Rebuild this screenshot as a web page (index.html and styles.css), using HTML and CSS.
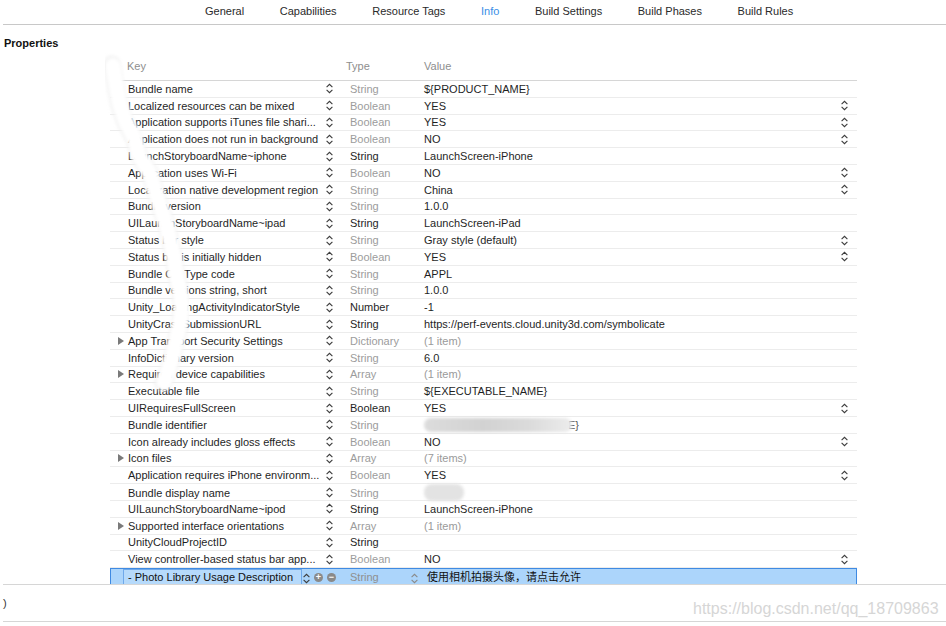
FILE: index.html
```html
<!DOCTYPE html>
<html>
<head>
<meta charset="utf-8">
<link rel="stylesheet" href="styles.css">
</head>
<body>
<svg width="0" height="0" class="defs">
  <defs>
    <symbol id="stp" viewBox="0 0 7 11"><path d="M0.6 4.2 L3.5 1.3 L6.4 4.2 M0.6 6.8 L3.5 9.7 L6.4 6.8" fill="none" stroke="currentColor" stroke-width="1.1"/></symbol>
  </defs>
</svg>
<div class="tabs">
  <span>General</span><span>Capabilities</span><span>Resource Tags</span><span class="active">Info</span><span>Build Settings</span><span>Build Phases</span><span>Build Rules</span>
</div>
<div class="props-title">Properties</div>
<div class="table">
  <div class="thead"><span class="h-key">Key</span><span>Type</span><span>Value</span></div>
  <div class="rows">
    <div class="row"><span class="k">Bundle name</span><span class="st"><svg><use href="#stp"/></svg></span><span class="t">String</span><span class="v">${PRODUCT_NAME}</span><span class="vs"></span></div>
    <div class="row"><span class="k">Localized resources can be mixed</span><span class="st"><svg><use href="#stp"/></svg></span><span class="t">Boolean</span><span class="v">YES</span><span class="vs"><svg><use href="#stp"/></svg></span></div>
    <div class="row"><span class="k">Application supports iTunes file shari...</span><span class="st"><svg><use href="#stp"/></svg></span><span class="t">Boolean</span><span class="v">YES</span><span class="vs"><svg><use href="#stp"/></svg></span></div>
    <div class="row"><span class="k">Application does not run in background</span><span class="st"><svg><use href="#stp"/></svg></span><span class="t">Boolean</span><span class="v">NO</span><span class="vs"><svg><use href="#stp"/></svg></span></div>
    <div class="row"><span class="k">LaunchStoryboardName~iphone</span><span class="st"><svg><use href="#stp"/></svg></span><span class="t dark">String</span><span class="v">LaunchScreen-iPhone</span><span class="vs"></span></div>
    <div class="row"><span class="k">Application uses Wi-Fi</span><span class="st"><svg><use href="#stp"/></svg></span><span class="t">Boolean</span><span class="v">NO</span><span class="vs"><svg><use href="#stp"/></svg></span></div>
    <div class="row"><span class="k">Localization native development region</span><span class="st"><svg><use href="#stp"/></svg></span><span class="t">String</span><span class="v">China</span><span class="vs"><svg><use href="#stp"/></svg></span></div>
    <div class="row"><span class="k">Bundle version</span><span class="st"><svg><use href="#stp"/></svg></span><span class="t">String</span><span class="v">1.0.0</span><span class="vs"></span></div>
    <div class="row"><span class="k">UILaunchStoryboardName~ipad</span><span class="st"><svg><use href="#stp"/></svg></span><span class="t dark">String</span><span class="v">LaunchScreen-iPad</span><span class="vs"></span></div>
    <div class="row"><span class="k">Status bar style</span><span class="st"><svg><use href="#stp"/></svg></span><span class="t">String</span><span class="v">Gray style (default)</span><span class="vs"><svg><use href="#stp"/></svg></span></div>
    <div class="row"><span class="k">Status bar is initially hidden</span><span class="st"><svg><use href="#stp"/></svg></span><span class="t">Boolean</span><span class="v">YES</span><span class="vs"><svg><use href="#stp"/></svg></span></div>
    <div class="row"><span class="k">Bundle OS Type code</span><span class="st"><svg><use href="#stp"/></svg></span><span class="t">String</span><span class="v">APPL</span><span class="vs"></span></div>
    <div class="row"><span class="k">Bundle versions string, short</span><span class="st"><svg><use href="#stp"/></svg></span><span class="t">String</span><span class="v">1.0.0</span><span class="vs"></span></div>
    <div class="row"><span class="k">Unity_LoadingActivityIndicatorStyle</span><span class="st"><svg><use href="#stp"/></svg></span><span class="t dark">Number</span><span class="v">-1</span><span class="vs"></span></div>
    <div class="row"><span class="k">UnityCrashSubmissionURL</span><span class="st"><svg><use href="#stp"/></svg></span><span class="t dark">String</span><span class="v">https://perf-events.cloud.unity3d.com/symbolicate</span><span class="vs"></span></div>
    <div class="row"><span class="k"><i class="tri"></i>App Transport Security Settings</span><span class="st"><svg><use href="#stp"/></svg></span><span class="t">Dictionary</span><span class="v grey">(1 item)</span><span class="vs"></span></div>
    <div class="row"><span class="k">InfoDictionary version</span><span class="st"><svg><use href="#stp"/></svg></span><span class="t">String</span><span class="v">6.0</span><span class="vs"></span></div>
    <div class="row"><span class="k"><i class="tri"></i>Required device capabilities</span><span class="st"><svg><use href="#stp"/></svg></span><span class="t">Array</span><span class="v grey">(1 item)</span><span class="vs"></span></div>
    <div class="row"><span class="k">Executable file</span><span class="st"><svg><use href="#stp"/></svg></span><span class="t">String</span><span class="v">${EXECUTABLE_NAME}</span><span class="vs"></span></div>
    <div class="row"><span class="k">UIRequiresFullScreen</span><span class="st"><svg><use href="#stp"/></svg></span><span class="t dark">Boolean</span><span class="v">YES</span><span class="vs"><svg><use href="#stp"/></svg></span></div>
    <div class="row"><span class="k">Bundle identifier</span><span class="st"><svg><use href="#stp"/></svg></span><span class="t">String</span><span class="v"><i class="blob blob-id"></i><span class="tail">E}</span></span><span class="vs"></span></div>
    <div class="row"><span class="k">Icon already includes gloss effects</span><span class="st"><svg><use href="#stp"/></svg></span><span class="t">Boolean</span><span class="v">NO</span><span class="vs"><svg><use href="#stp"/></svg></span></div>
    <div class="row"><span class="k"><i class="tri"></i>Icon files</span><span class="st"><svg><use href="#stp"/></svg></span><span class="t">Array</span><span class="v grey">(7 items)</span><span class="vs"></span></div>
    <div class="row"><span class="k">Application requires iPhone environm...</span><span class="st"><svg><use href="#stp"/></svg></span><span class="t">Boolean</span><span class="v">YES</span><span class="vs"><svg><use href="#stp"/></svg></span></div>
    <div class="row"><span class="k">Bundle display name</span><span class="st"><svg><use href="#stp"/></svg></span><span class="t">String</span><span class="v"><i class="blob blob-name"></i></span><span class="vs"></span></div>
    <div class="row"><span class="k">UILaunchStoryboardName~ipod</span><span class="st"><svg><use href="#stp"/></svg></span><span class="t dark">String</span><span class="v">LaunchScreen-iPhone</span><span class="vs"></span></div>
    <div class="row"><span class="k"><i class="tri"></i>Supported interface orientations</span><span class="st"><svg><use href="#stp"/></svg></span><span class="t">Array</span><span class="v grey">(1 item)</span><span class="vs"></span></div>
    <div class="row"><span class="k">UnityCloudProjectID</span><span class="st"><svg><use href="#stp"/></svg></span><span class="t dark">String</span><span class="v"></span><span class="vs"></span></div>
    <div class="row"><span class="k">View controller-based status bar app...</span><span class="st"><svg><use href="#stp"/></svg></span><span class="t">Boolean</span><span class="v">NO</span><span class="vs"><svg><use href="#stp"/></svg></span></div>
    <div class="row sel">
      <span class="field">- Photo Library Usage Description</span>
      <svg class="sel-stp"><use href="#stp"/></svg>
      <span class="circ">+</span><span class="circ minus">−</span>
      <span class="sel-type">String</span>
      <svg class="sel-vstp"><use href="#stp"/></svg>
      <span class="sel-val">使用相机拍摄头像，请点击允许</span>
    </div>
  </div>
</div>
<div class="bottom">)</div>
<div class="watermark">https://blog.csdn.net/qq_18709863</div>
<svg class="smear" width="946" height="626">
  <defs><filter id="bl"><feGaussianBlur stdDeviation="1.4"/></filter></defs>
  <path d="M112 64 L116 90 L119 105 L125 122 L134 139 L139 156 L150 173 L155 190 L160 206 L166 223 L170 240 L174 257 L176 274 L180 290 L182 307 L180 324 L176 341 L172 358 L167 374 L163 383" fill="none" stroke="#ececec" stroke-width="18" stroke-linecap="round" stroke-linejoin="round" filter="url(#bl)" opacity="0.5"/>
  <path d="M113 66 L117 90 L120 105 L126 122 L135 139 L139 156 L150 173 L155 190 L160 206 L166 223 L170 240 L174 257 L176 274 L180 290 L182 307 L180 324 L176 341 L172 358 L167 374 L164 382" fill="none" stroke="#ffffff" stroke-width="15" stroke-linecap="round" stroke-linejoin="round" filter="url(#bl)"/>
</svg>
</body>
</html>
```
FILE: styles.css
```css
* { box-sizing: border-box; }
html, body { margin: 0; padding: 0; }
body {
  width: 946px;
  height: 626px;
  overflow: hidden;
  position: relative;
  background: #ffffff;
  font-family: "Liberation Sans", Arial, sans-serif;
  font-size: 11px;
  line-height: 14px;
  color: #1f1f1f;
}
.defs { position: absolute; }
.tabs {
  display: flex;
  gap: 35.6px;
  margin-left: 3px;
  padding-left: 202px;
  padding-top: 4px;
  height: 25px;
  border-bottom: 1px solid #c8c8c8;
  color: #2a2a2a;
}
.tabs .active { color: #3a8ee6; }
.props-title {
  margin-top: 11px;
  margin-left: 4px;
  font-weight: bold;
  color: #111;
}
.table {
  margin-left: 110px;
  width: 747px;
  margin-top: 7px;
}
.thead {
  margin-left: 7px;
  height: 24px;
  padding-top: 2px;
  border-bottom: 1px solid #d6d6d6;
  display: grid;
  grid-template-columns: 229px 78px 1fr;
  color: #8e8e8e;
}
.h-key { padding-left: 10px; }
.rows {
  height: 503px;
  overflow: hidden;
}
.row {
  height: 16.8px;
  border-bottom: 1px solid #ececec;
  display: grid;
  grid-template-columns: 216px 24px 74px 1fr 19px;
  align-items: center;
}
.k {
  display: flex;
  align-items: center;
  padding-left: 18px;
  white-space: nowrap;
  overflow: hidden;
}
.tri {
  width: 0;
  height: 0;
  margin-left: -10px;
  margin-right: 4px;
  border-left: 6px solid #7a7a7a;
  border-top: 4px solid transparent;
  border-bottom: 4px solid transparent;
}
.st, .vs { display: flex; align-items: center; }
.st svg, .vs svg, .sel-stp, .sel-vstp {
  width: 7px;
  height: 11px;
  color: #3c3c3c;
}
.vs svg { margin-left: 3px; }
.t { color: #9c9c9c; }
.t.dark { color: #1f1f1f; }
.v { white-space: nowrap; display: flex; align-items: center; }
.v.grey { color: #9a9a9a; }
.blob {
  display: inline-block;
  background: linear-gradient(90deg, #dcdcdc, #d2d2d2 40%, #dadada 70%, #ececec);
  border-radius: 8px;
  filter: blur(1.5px);
}
.blob-id { width: 148px; height: 14px; }
.blob-name { width: 40px; height: 17px; background: #e3e3e3; }
.tail { margin-left: -4px; color: #555; }
.row.sel {
  display: flex;
  align-items: stretch;
  background: #acd5fb;
  border: 1px solid #3f8ae2;
  border-bottom: none;
  height: 17px;
}
.field {
  margin-left: 12px;
  width: 179px;
  padding-left: 4px;
  border: 1px solid #6fa9ea;
  border-bottom: none;
  background: #b6dafb;
  color: #111;
  white-space: nowrap;
  overflow: hidden;
  line-height: 14px;
}
.sel-stp { margin-left: 1px; align-self: center; margin-top: 2px; }
.circ {
  align-self: center;
  margin-left: 4px;
  width: 9px;
  height: 9px;
  border-radius: 50%;
  background: #8a8a8a;
  color: #fff;
  font-size: 9px;
  line-height: 9px;
  font-weight: bold;
  text-align: center;
}
.sel-type {
  margin-left: 14px;
  width: 61px;
  color: #8f8f8f;
  align-self: center;
}
.sel-vstp { color: #8a8a8a; align-self: center; margin-top: 2px; }
.sel-val {
  margin-left: 9px;
  align-self: center;
  font-family: "Liberation Sans", "Noto Sans CJK SC", sans-serif;
  color: #111;
}
.bottom {
  margin-left: 3px;
  height: 38px;
  padding-top: 11px;
  border-top: 1px solid #d6d6d6;
  border-bottom: 1px solid #d6d6d6;
  color: #333;
}
.watermark {
  position: absolute;
  left: 693px;
  top: 600px;
  font-size: 16px;
  line-height: 18px;
  color: #d6d6d6;
  font-family: "Liberation Sans", Arial, sans-serif;
}
.smear {
  position: absolute;
  left: 0;
  top: 0;
  pointer-events: none;
}
```
